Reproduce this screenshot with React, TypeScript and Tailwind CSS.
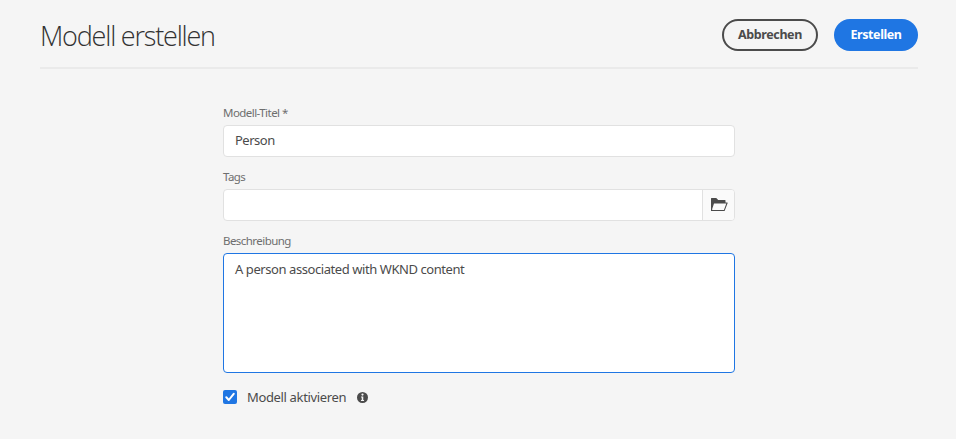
import type { ReactNode } from 'react';

function Field({ label, children, className = '' }: { label: string; children: ReactNode; className?: string }) {
  return (
    <label className={`block ${className}`}>
      <span className="block h-6 text-[11.5px] leading-6 tracking-[-0.55px] whitespace-nowrap text-[#6e6e6e]">{label}</span>
      {children}
    </label>
  );
}

function FolderOpen() {
  return (
    <svg width="18" height="18" viewBox="0 0 18 18" fill="#4b4b4b">
      <path d="M15.5 6.5V4.5a.5.5 0 0 0-.5-.5H8.2L6.6 2.3A1 1 0 0 0 5.9 2H1.5a.5.5 0 0 0-.5.5V15h13.6l3-7.8a.5.5 0 0 0-.5-.7zM2.2 13L4 7.4H16.3L13.9 14H2.2z" fillRule="evenodd" />
    </svg>
  );
}

export default function App() {
  return (
    <main className="h-[439px] w-[956px] overflow-hidden bg-[#f5f5f5] pr-[38px] pl-10 font-['Noto_Sans',sans-serif] text-[#4b4b4b]">
      <header className="flex h-[69px] items-start justify-between border-b-2 border-[#eaeaea]">
        <h1 className="pt-[18px] font-['Open_Sans',sans-serif] text-[27px] leading-[36px] font-light tracking-[-1.2px] whitespace-nowrap text-[#323232]">Modell erstellen</h1>
        <div className="flex gap-4 pt-[19px] text-[12.5px] font-bold">
          <button className="h-8 w-24 rounded-full border-2 border-[#4b4b4b] pt-px tracking-[-0.4px]">Abbrechen</button>
          <button className="h-8 w-[84px] rounded-full bg-[#1f76e3] pt-px tracking-[-0.4px] text-white">Erstellen</button>
        </div>
      </header>
      <form className="ml-[183px] w-[512px] pt-8">
        <Field label="Modell-Titel *">
          <input defaultValue="Person" className="block h-8 w-full rounded border border-[#e1e1e1] bg-white px-[11px] pb-[3px] text-[13px] tracking-[-0.5px] outline-none" />
        </Field>
        <Field label="Tags" className="mt-2">
          <span className="flex h-8 overflow-hidden rounded border border-[#e1e1e1] bg-white">
            <input className="min-w-0 flex-1 outline-none" />
            <span className="flex w-8 items-center justify-center border-l border-[#e1e1e1] bg-[#fafafa]"><FolderOpen /></span>
          </span>
        </Field>
        <Field label="Beschreibung" className="mt-2">
          <textarea defaultValue="A person associated with WKND content" className="block h-[120px] w-full resize-none rounded border border-[#1f76e3] bg-white px-[11px] py-[5px] text-[13px] leading-5 tracking-[-0.43px] outline-none" />
        </Field>
        <div className="mt-2 flex h-8 items-center text-[13px]">
          <span className="flex size-3.5 items-center justify-center rounded-[2px] bg-[#1f76e3]">
            <svg width="10" height="10" viewBox="0 0 10 10" fill="none" stroke="white" strokeWidth="2" strokeLinecap="round" strokeLinejoin="round"><path d="M1.3 5.3 3.8 8 8.7 1.8" /></svg>
          </span>
          <span className="ml-[10px] w-[99px] pt-px tracking-[-0.35px] whitespace-nowrap">Modell aktivieren</span>
          <svg className="ml-[11px]" width="11" height="11" viewBox="0 0 10 10">
            <circle cx="5" cy="5" r="5" fill="#4b4b4b" />
            <circle cx="5" cy="2.3" r="1" fill="#f5f5f5" />
            <path d="M3.7 4h2v3.2h.7v.9H3.6v-.9h.7V4.9h-.6z" fill="#f5f5f5" />
          </svg>
        </div>
      </form>
    </main>
  );
}
